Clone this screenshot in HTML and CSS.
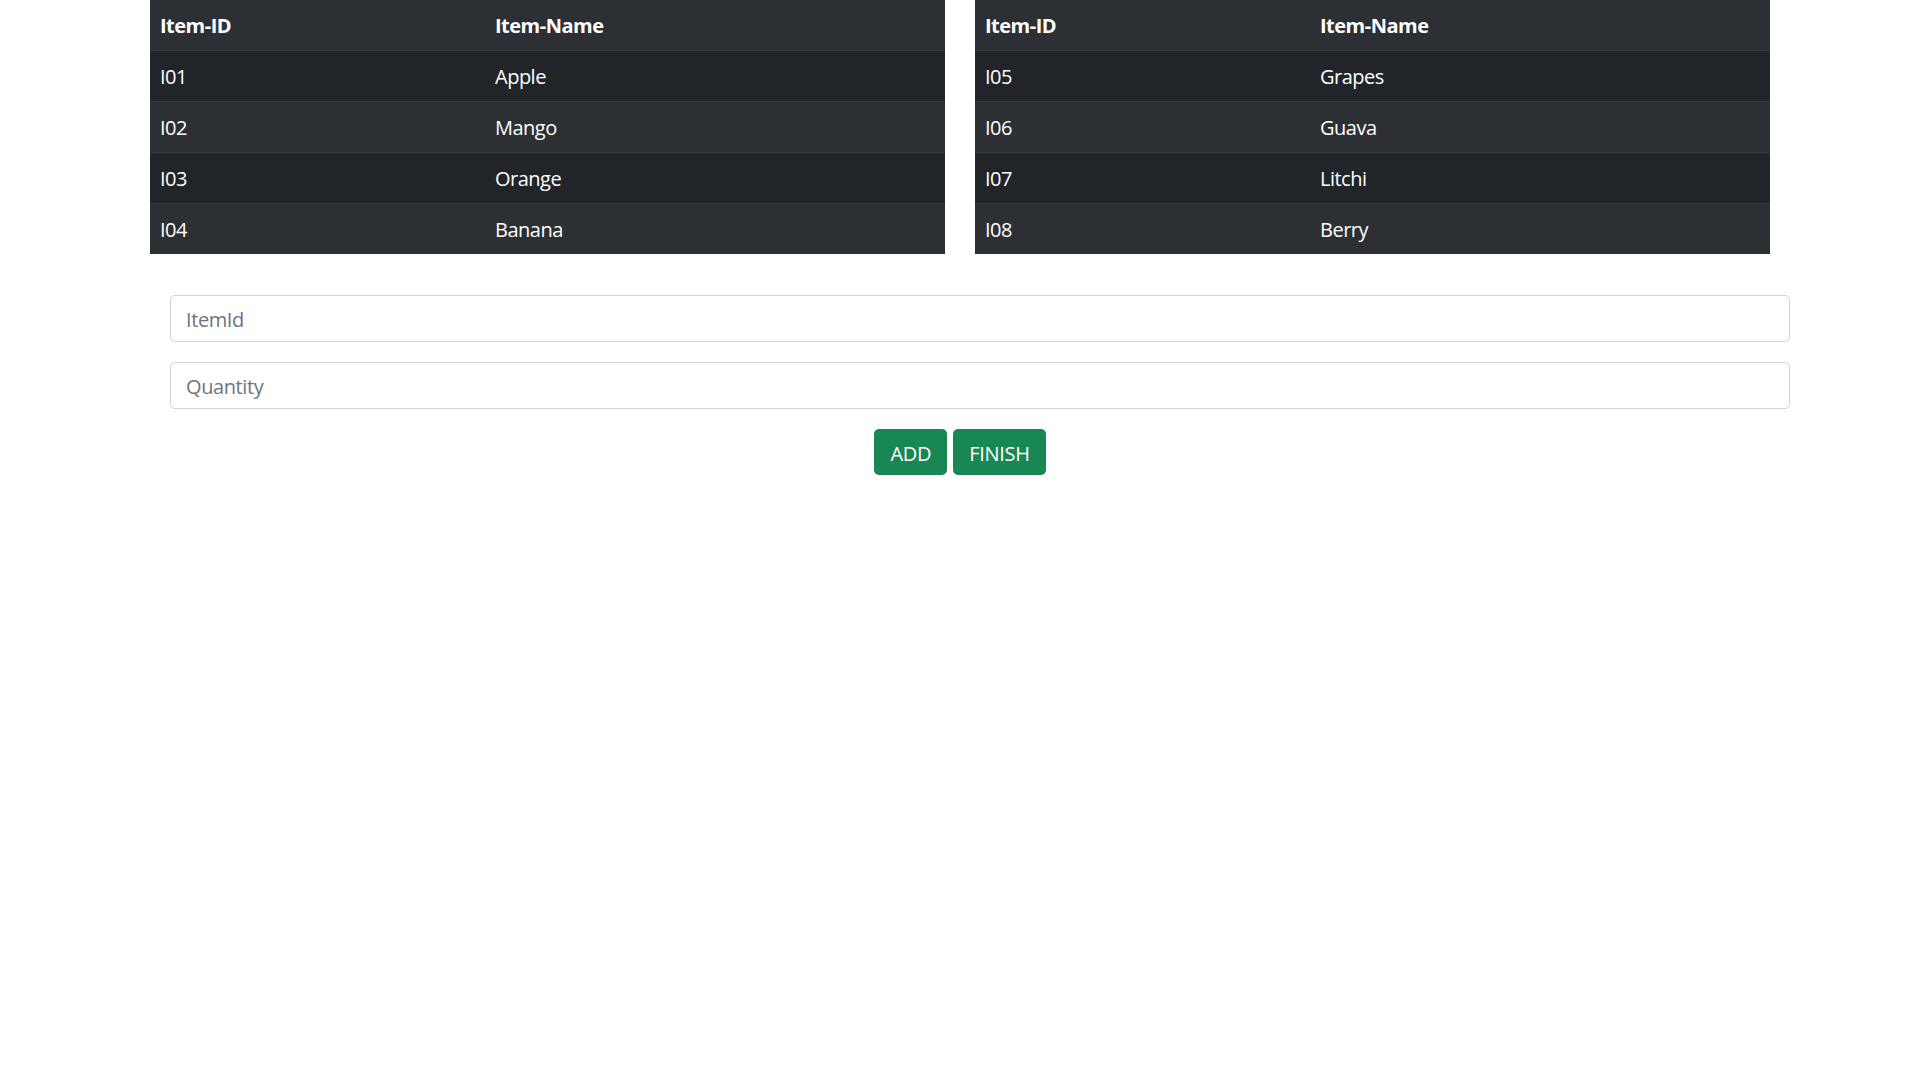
FILE: index.html
```html
<!DOCTYPE html>
<html lang="en">
<head>
<meta charset="utf-8">
<title>Items</title>
<link rel="stylesheet" href="styles.css">
</head>
<body>
<div class="page">
  <div class="tables">
    <table class="items">
      <thead><tr><th class="id">Item-ID</th><th>Item-Name</th></tr></thead>
      <tbody>
        <tr class="odd"><td>I01</td><td>Apple</td></tr>
        <tr class="even"><td>I02</td><td>Mango</td></tr>
        <tr class="odd"><td>I03</td><td>Orange</td></tr>
        <tr class="even"><td>I04</td><td>Banana</td></tr>
      </tbody>
    </table>
    <table class="items">
      <thead><tr><th class="id">Item-ID</th><th>Item-Name</th></tr></thead>
      <tbody>
        <tr class="odd"><td>I05</td><td>Grapes</td></tr>
        <tr class="even"><td>I06</td><td>Guava</td></tr>
        <tr class="odd"><td>I07</td><td>Litchi</td></tr>
        <tr class="even"><td>I08</td><td>Berry</td></tr>
      </tbody>
    </table>
  </div>
  <form class="form">
    <input class="field" type="text" placeholder="ItemId">
    <input class="field" type="text" placeholder="Quantity">
    <div class="actions">
      <button type="button" class="btn">ADD</button>
      <button type="button" class="btn">FINISH</button>
    </div>
  </form>
</div>
</body>
</html>
```
FILE: styles.css
```css
* { box-sizing: border-box; }
html, body { margin: 0; padding: 0; background: #fff; }
body {
  font-family: "Open Sans", "Noto Sans", sans-serif;
  font-size: 20px;
  color: #212529;
}
.page { width: 1920px; }
.tables {
  display: flex;
  justify-content: center;
  gap: 30px;
}
.items {
  width: 795px;
  border-collapse: collapse;
  table-layout: fixed;
  color: #fff;
}
.items th, .items td {
  text-align: left;
  padding: 2px 10px 0;
  height: 51px;
  line-height: 30px;
  border-bottom: 1px solid #373b3e;
  letter-spacing: -0.5px;
}
.items th { font-weight: 700; background: #2c3034; height: 50px; }
.items th.id { width: 335px; }
.items tr.odd td { background: #212529; }
.items tr.even td { background: #2c3034; }
.items tbody tr:last-child td { border-bottom: 0; height: 51px; }
.form {
  margin: 41px 130px 0 170px;
  display: flex;
  flex-direction: column;
  gap: 20px;
}
.field {
  width: 1620px;
  height: 47px;
  border: 1px solid #ced4da;
  border-radius: 5px;
  padding: 2px 15px 0;
  font-family: inherit;
  font-size: 20px;
  letter-spacing: -0.4px;
  color: #212529;
}
.field::placeholder { color: #6c757d; }
.actions {
  display: flex;
  justify-content: center;
  gap: 6px;
  margin-left: -40px;
  width: 1660px;
}
.btn {
  height: 46px;
  background: #198754;
  color: #fff;
  border: 0;
  border-radius: 5px;
  font-family: inherit;
  font-size: 20px;
  letter-spacing: -0.3px;
  padding: 2px 16px 0;
}
```
